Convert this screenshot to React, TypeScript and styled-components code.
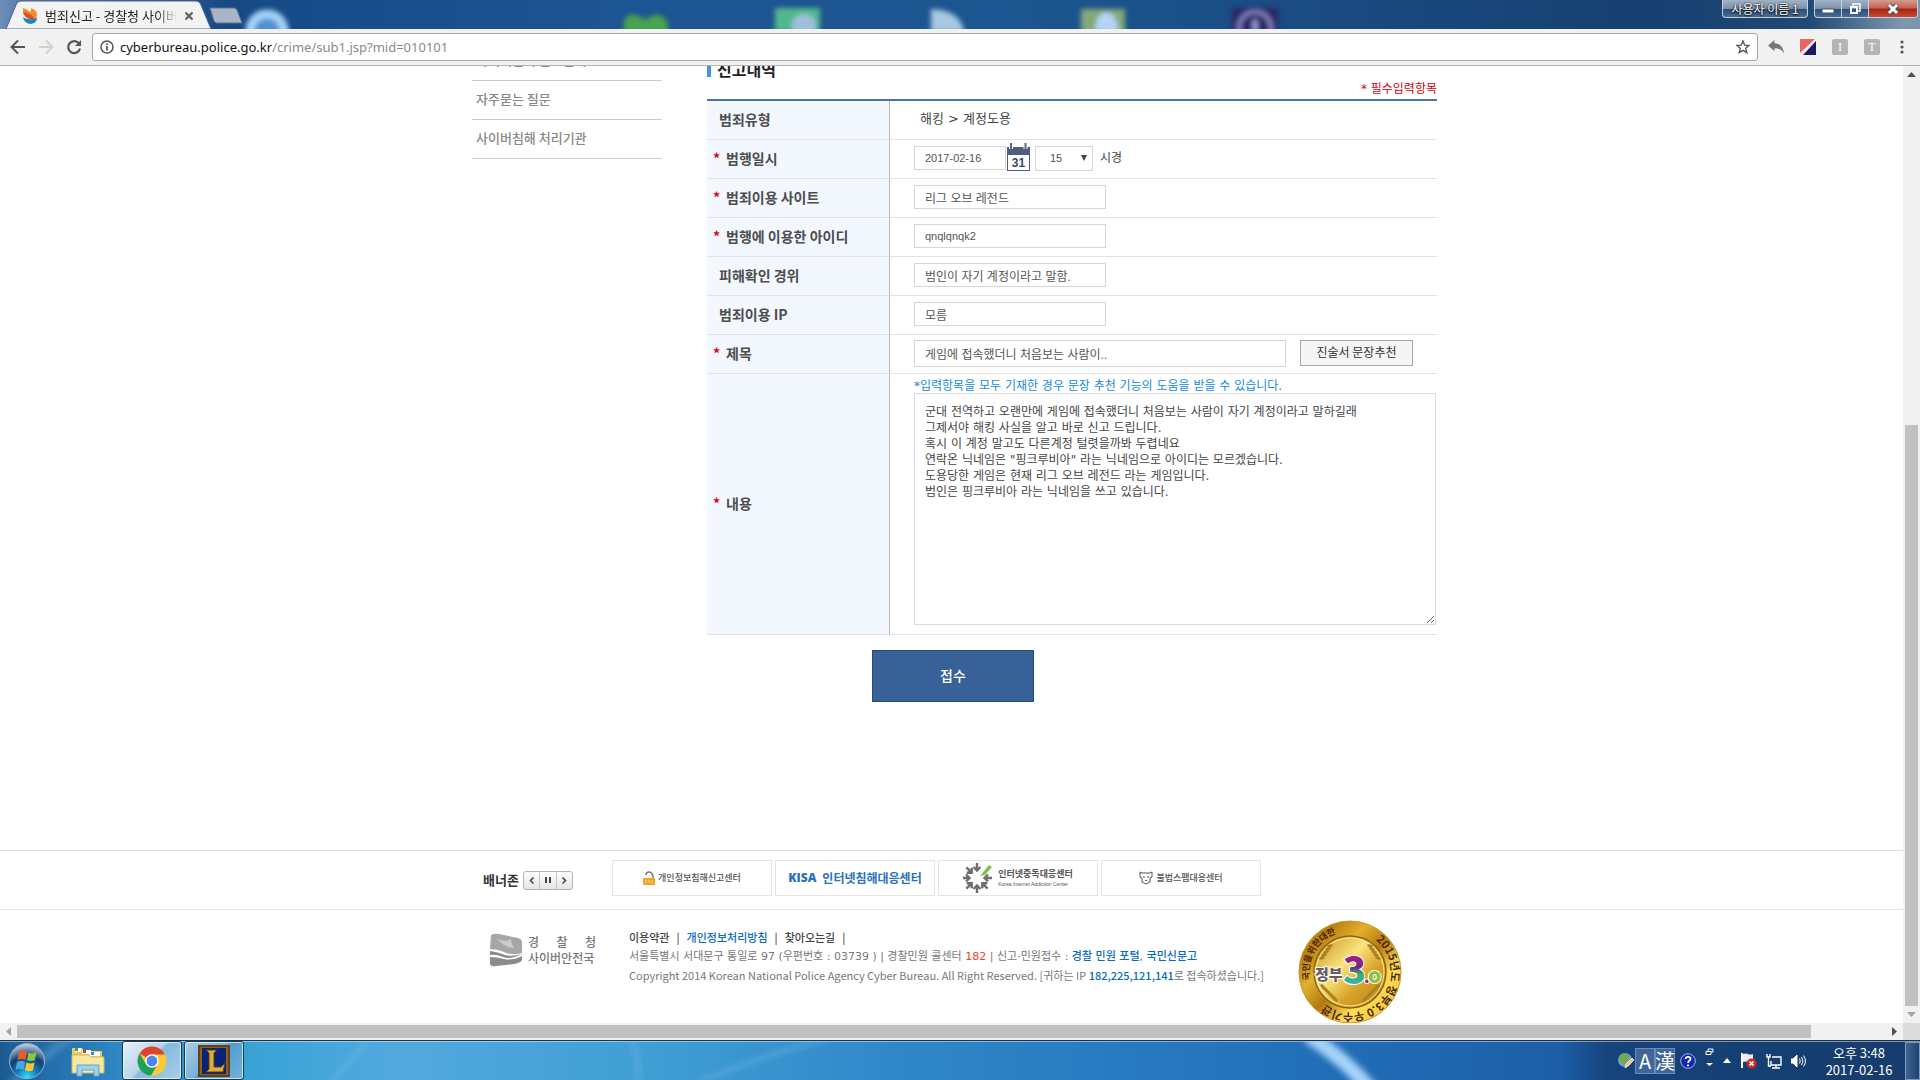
import React from "react";
import styled, { createGlobalStyle } from "styled-components";

const KR = `"Noto Sans CJK KR", sans-serif`;

const Global = createGlobalStyle`
  * { box-sizing: border-box; }
  html, body { margin: 0; padding: 0; }
  body { font-family: ${KR}; font-size: 12px; color: #444; background: #fff; overflow: hidden; }
  button, input, select, textarea { font-family: inherit; margin: 0; }
  a { color: inherit; text-decoration: none; }
  svg { display: block; flex: none; }
`;

const Screen = styled.div`
  height: 100vh;
  display: flex;
  flex-direction: column;
  overflow: hidden;
`;

/* ---------- browser frame ---------- */

const TitleBar = styled.header`
  position: relative;
  flex: none;
  height: 29px;
  display: flex;
  justify-content: space-between;
  background: linear-gradient(90deg, #6f8db8 0, #5573a5 30px, #164a86 230px, #1d5492 620px, #1c5690 1000px, #1a4a80 1350px, #173f70 1650px, #1f4976 1810px, #7d95ad 1900px);
`;

const Wallpaper = styled.svg`
  position: absolute;
  left: 0;
  top: 0;
`;

const Tab = styled.div`
  position: relative;
  display: flex;
  align-items: center;
  gap: 7px;
  width: 212px;
  height: 29px;
  padding: 2px 18px 0 22px;
`;

const TabShape = styled.svg`
  position: absolute;
  left: 0;
  top: 0;
`;

const TabTitle = styled.span`
  position: relative;
  flex: 1;
  overflow: hidden;
  white-space: nowrap;
  font-size: 13px;
  line-height: 20px;
  color: #222;
  mask-image: linear-gradient(90deg, #000 85%, transparent);
`;

const TabIcon = styled.span`
  position: relative;
`;

const BareButton = styled.button`
  position: relative;
  display: flex;
  align-items: center;
  justify-content: center;
  padding: 0;
  border: 0;
  background: none;
`;

const WindowControls = styled.div`
  position: relative;
  display: flex;
  align-items: flex-start;
  gap: 6px;
  padding-right: 2px;
`;

const glass = `
  border: 1px solid #c3d0de;
  border-top: 0;
  background: linear-gradient(#a3b3c6 0, #7b90aa 50%, #2b4d75 52%, #4a6b91 100%);
`;

const UserButton = styled.button`
  height: 18px;
  width: 86px;
  padding: 0;
  border-radius: 0 0 4px 4px;
  ${glass}
  color: #fff;
  font-size: 12px;
  line-height: 16px;
  text-shadow: 0 0 2px #000, 0 1px 2px #000;
`;

const ControlGroup = styled.div`
  display: flex;
  height: 18px;
  overflow: hidden;
  border-radius: 0 0 4px 4px;
  ${glass}
`;

const ControlButton = styled(BareButton)<{ $close?: boolean }>`
  width: ${(p) => (p.$close ? 48 : 27)}px;
  height: 17px;
  border-right: ${(p) => (p.$close ? 0 : 1)}px solid #c3d0de;
  background: ${(p) => (p.$close ? "linear-gradient(#d59a92 0, #c4604f 48%, #a82414 52%, #c8492f 100%)" : "none")};
`;

const Toolbar = styled.nav`
  flex: none;
  display: flex;
  align-items: center;
  height: 37px;
  padding: 0 12px 0 4px;
  background: #f2f1f2;
  border-bottom: 1px solid #b5b4b5;
`;

const NavButton = styled(BareButton)`
  width: 28px;
  height: 28px;
  margin-top: -1px;
`;

const Address = styled.div`
  flex: 1;
  display: flex;
  align-items: center;
  gap: 6px;
  height: 28px;
  margin: -1px 0 0 4px;
  padding: 0 7px;
  background: #fff;
  border: 1px solid #a9a8a9;
  border-radius: 3px;
`;

const Url = styled.div`
  flex: 1;
  font-family: "Noto Sans", sans-serif;
  font-size: 13px;
  line-height: 20px;
  color: #8a8a8a;
  outline: 0;
`;

const Host = styled.span`
  color: #111;
`;

const Extensions = styled.div`
  display: flex;
  align-items: center;
  gap: 16px;
  margin-left: 10px;
`;

const Extension = styled(BareButton)<{ $letter?: boolean; $narrow?: boolean }>`
  width: ${(p) => (p.$narrow ? 12 : 16)}px;
  height: 16px;
  border-radius: 2px;
  background: ${(p) => (p.$letter ? "#b6b5b6" : "none")};
  color: #fff;
  font-family: "Liberation Serif", serif;
  font-size: 12px;
  line-height: 16px;
`;

/* ---------- viewport with scroll bars ---------- */

const Viewport = styled.div`
  flex: 1;
  min-height: 0;
  display: grid;
  grid-template-columns: 1fr 17px;
  grid-template-rows: 1fr 17px;
`;

const PageView = styled.div`
  overflow: hidden;
`;

const ScrolledPage = styled.div`
  margin-top: -24px;
`;

const VScroll = styled.div`
  display: flex;
  flex-direction: column;
  align-items: center;
  background: #f1f1f1;
`;

const HScroll = styled.div`
  display: flex;
  align-items: center;
  background: #f1f1f1;
`;

const ScrollArrow = styled(BareButton)`
  flex: none;
  width: 17px;
  height: 17px;
`;

const VTrack = styled.div`
  flex: 1;
  display: flex;
  flex-direction: column;
  justify-content: flex-end;
`;

const VThumb = styled.div`
  width: 13px;
  height: 63%;
  background: #c1c1c1;
`;

const HTrack = styled.div`
  flex: 1;
`;

const HThumb = styled.div`
  width: 96%;
  height: 13px;
  background: #c1c1c1;
`;

const ScrollCorner = styled.div`
  background: #dcdcdc;
`;

/* ---------- page ---------- */

const Container = styled.div`
  display: flex;
  width: 971px;
  max-width: 100%;
  margin: 0 auto;
  padding-left: 6px;
`;

const Side = styled.ul`
  flex: none;
  width: 190px;
  margin: 0 45px 0 0;
  padding: 0;
  list-style: none;
`;

const SideItem = styled.li`
  height: 39px;
  padding-left: 4px;
  border-bottom: 1px solid #ccc;
  font-size: 13px;
  font-weight: 500;
  line-height: 36px;
  color: #888;
`;

const Main = styled.main`
  flex: 1;
  padding-top: 17px;
`;

const Heading = styled.h2`
  display: flex;
  align-items: center;
  gap: 6px;
  margin: 0;
  font-size: 16px;
  font-weight: 700;
  line-height: 20px;
  color: #222;
  &::before {
    content: "";
    width: 4px;
    height: 16px;
    background: #3f93e5;
  }
`;

const RequiredNote = styled.p`
  margin: 0;
  padding: 2px 0;
  text-align: right;
  font-family: "DejaVu Sans", ${KR};
  font-size: 12px;
  line-height: 16px;
  color: #d8000c;
`;

const FormTable = styled.table`
  width: 100%;
  border-spacing: 0;
  border-top: 2px solid #4477a8;
`;

const Label = styled.th<{ $required?: boolean }>`
  width: 183px;
  height: 39px;
  padding: 0 0 2px ${(p) => (p.$required ? 6 : 12)}px;
  text-align: left;
  font-size: 14px;
  font-weight: 700;
  line-height: 20px;
  color: #4d4d4f;
  background: #f3f8fe;
  border-right: 1px solid #b9b9b9;
  border-bottom: 1px solid #e2e2e2;
`;

const Star = styled.span`
  display: inline-block;
  width: 13px;
  color: #e00015;
`;

const Cell = styled.td`
  padding: 0 0 2px 24px;
  border-bottom: 1px solid #e2e2e2;
`;

const FieldRow = styled.div`
  display: flex;
  align-items: center;
`;

const PlainText = styled.span`
  padding-left: 6px;
  font-family: "DejaVu Sans", ${KR};
  font-size: 13px;
  line-height: 20px;
  color: #444;
`;

const TextInput = styled.input<{ $w: number; $tall?: boolean; $latin?: boolean }>`
  width: ${(p) => p.$w}px;
  height: ${(p) => (p.$tall ? 27 : 24)}px;
  padding: 0 10px;
  border: 1px solid #d5d5d5;
  background: #fff;
  font-family: "Liberation Sans", ${KR};
  font-size: ${(p) => (p.$latin ? 11 : 12)}px;
  color: #555;
  outline: 0;
`;

const CalendarButton = styled(BareButton)`
  margin: 0 5px 2px 1px;
`;

const HourBox = styled.span`
  position: relative;
  display: flex;
  margin-right: 7px;
`;

const HourArrow = styled.svg`
  position: absolute;
  right: 6px;
  top: 9px;
  pointer-events: none;
`;

const HourSelect = styled.select`
  appearance: none;
  width: 58px;
  height: 25px;
  padding: 0 14px;
  border: 1px solid #d5d5d5;
  border-radius: 0;
  background: #fff;
  font-family: "Liberation Sans", sans-serif;
  font-size: 11px;
  color: #555;
`;

const HourUnit = styled.span`
  padding-bottom: 3px;
`;

const SuggestButton = styled.button`
  width: 113px;
  height: 26px;
  margin-left: 14px;
  padding: 0 0 2px;
  border: 1px solid #a8a8a8;
  background: #f5f5f5;
  font-size: 12px;
  line-height: 20px;
  color: #333;
`;

const Hint = styled.p`
  margin: 0;
  padding-top: 5px;
  font-family: "DejaVu Sans", ${KR};
  font-size: 12px;
  line-height: 14px;
  color: #128ae0;
`;

const ContentCell = styled(Cell)`
  padding-bottom: 9px;
`;

const ContentBox = styled.textarea`
  display: block;
  width: 522px;
  height: 232px;
  padding: 10px;
  border: 1px solid #dcdcdc;
  background: #fff;
  font-family: "DejaVu Sans", ${KR};
  font-size: 12px;
  line-height: 16px;
  color: #444;
  resize: both;
  outline: 0;
`;

const SubmitRow = styled.div`
  padding: 15px 0 148px 165px;
`;

const Submit = styled.button`
  display: block;
  width: 162px;
  height: 52px;
  padding: 0 0 2px;
  border: 1px solid #234b7c;
  background: #386297;
  color: #fff;
  font-size: 14px;
  font-weight: 500;
  line-height: 20px;
`;

/* ---------- footer ---------- */

const BannerStrip = styled.section`
  border-top: 1px solid #dedede;
  border-bottom: 1px solid #e2e2e2;
`;

const BannerRow = styled(Container)`
  align-items: center;
  height: 58px;
  padding-left: 17px;
`;

const BannerLabel = styled.strong`
  width: 40px;
  font-size: 13px;
  line-height: 20px;
  color: #333;
`;

const Pager = styled.div`
  display: flex;
  width: 50px;
  height: 19px;
  margin-right: 39px;
  border: 1px solid #b5b5b5;
  border-radius: 3px;
  background: linear-gradient(#fff, #e4e4e4);
`;

const PagerButton = styled(BareButton)`
  flex: 1;
  & + & {
    border-left: 1px solid #c5c5c5;
  }
`;

const Banners = styled.div`
  display: flex;
  gap: 3px;
  padding-bottom: 4px;
`;

const Banner = styled.a<{ $tone?: string; $size?: number; $bold?: boolean }>`
  display: flex;
  align-items: center;
  justify-content: center;
  gap: 3px;
  width: 160px;
  height: 36px;
  border: 1px solid #e4e4e4;
  font-size: ${(p) => p.$size || 9}px;
  font-weight: ${(p) => (p.$bold ? 700 : 500)};
  line-height: 12px;
  color: ${(p) => p.$tone || "#555"};
  white-space: nowrap;
`;

const Kisa = styled.b`
  padding-right: 3px;
  font-family: "Open Sans", sans-serif;
  font-size: 12px;
  font-weight: 800;
`;

const Stack = styled.span`
  display: flex;
  flex-direction: column;
`;

const Tiny = styled.span`
  font-family: "Liberation Sans", sans-serif;
  font-size: 5px;
  line-height: 8px;
  font-weight: 400;
`;

const FooterRow = styled(Container)`
  align-items: flex-start;
  padding: 10px 0 0 24px;
`;

const Agency = styled.div`
  display: flex;
  align-items: center;
  gap: 6px;
  width: 139px;
  padding-top: 13px;
`;

const AgencyName = styled.div`
  display: flex;
  flex-direction: column;
  width: 68px;
  font-size: 12px;
  font-weight: 500;
  line-height: 16px;
  color: #777;
  white-space: nowrap;
`;

const Spread = styled.span`
  display: flex;
  justify-content: space-between;
`;

const FooterInfo = styled.div`
  width: 669px;
  padding-top: 8px;
  font-size: 11px;
  line-height: 18px;
  color: #777;
  white-space: nowrap;
`;

const FooterLinks = styled.div`
  display: flex;
  gap: 7px;
  font-size: 11px;
  font-weight: 500;
  line-height: 18px;
  color: #444;
`;

const FooterLine = styled.p<{ $lead?: boolean }>`
  margin: 0;
  padding-top: ${(p) => (p.$lead ? 2 : 0)}px;
  font-family: ${(p) => (p.$lead ? `"DejaVu Sans", ${KR}` : KR)};
  font-size: 11px;
`;

const Blue = styled.a`
  color: #0a6cc0;
  font-weight: 500;
`;

const Red = styled.span`
  color: #e8452c;
`;

/* ---------- taskbar ---------- */

const Taskbar = styled.footer`
  position: relative;
  flex: none;
  display: flex;
  align-items: center;
  justify-content: space-between;
  height: 40px;
  border-top: 1px solid #17334f;
  background: linear-gradient(90deg, #1b5b93 0, #2572b0 60px, #2e88c4 120px, #3ba3d6 260px, #52a9de 400px, #409fd4 640px, #2f87c9 900px, #2270b9 1300px, #1d5ea8 1560px, #16437a 1610px, #153c6b 1920px);
  box-shadow: inset 0 1px 0 rgba(255, 255, 255, 0.45);
`;

const TaskGroup = styled.div`
  position: relative;
  display: flex;
  align-items: center;
  height: 39px;
`;

const Orb = styled(BareButton)`
  width: 54px;
  height: 39px;
`;

const Task = styled(BareButton)<{ $open?: boolean; $active?: boolean }>`
  width: ${(p) => (p.$open ? 60 : 68)}px;
  height: 39px;
  margin-right: ${(p) => (p.$open ? 2 : 0)}px;
  border: ${(p) => (p.$open ? "1px solid #123a57" : "0")};
  border-radius: 3px;
  box-shadow: ${(p) => (p.$open ? "inset 0 0 0 1px rgba(255,255,255,.65)" : "none")};
  background: ${(p) =>
    p.$active
      ? "linear-gradient(135deg, #e9f1f8, #b9d5ea 45%, #86b9df 50%, #a9cfe8)"
      : p.$open
        ? "linear-gradient(135deg, #a9cde6, #7ab3d8 45%, #4f9dcd 50%, #71b4dc)"
        : "none"};
`;

const Ime = styled(BareButton)`
  width: 20px;
  height: 26px;
  border: 1px solid rgba(150, 180, 215, 0.5);
  background: rgba(140, 170, 205, 0.35);
  color: #fff;
  font-size: 20px;
  line-height: 24px;
`;

const TrayIcons = styled.div`
  display: flex;
  align-items: center;
  gap: 9px;
  padding: 0 17px 0 5px;
`;

const Clock = styled.time`
  width: 72px;
  margin-right: 10px;
  text-align: center;
  font-size: 13px;
  line-height: 17px;
  color: #fff;
`;

const ShowDesktop = styled(BareButton)`
  width: 15px;
  height: 38px;
  border: 1px solid #7f9ab8;
  background: linear-gradient(90deg, #3f6490, #1c4270);
`;

const ArrowHead = ({ d, fill }: { d: string; fill: string }) => (
  <svg width="9" height="9" viewBox="0 0 9 9">
    <path d={d} fill={fill} />
  </svg>
);

const DesktopBlur = () => (
  <Wallpaper width="1400" height="29" viewBox="0 0 1400 29" aria-hidden="true">
    <defs>
      <filter id="soft" x="-20%" y="-50%" width="140%" height="200%">
        <feGaussianBlur stdDeviation="2.600" />
      </filter>
    </defs>
    <g filter="url(#soft)">
      <circle cx="267" cy="31" r="17" fill="#4f8fce" stroke="#a5d2f7" strokeWidth="9" />
      <path d="M624 32V20q5-7 12-5q5 2 10 5q6-6 13-5q8 3 9 10v8z" fill="#4aa34f" />
      <rect x="775" y="8" width="45" height="24" fill="#52b78e" />
      <circle cx="804" cy="26" r="12" fill="#9fc0dc" />
      <path d="M931 32V9q30 1 33 23z" fill="#a7c8e0" />
      <rect x="1081" y="9" width="44" height="24" fill="#84a878" />
      <path d="M1095 32q0-18 11-20q12 2 12 20z" fill="#b4d4f7" />
      <rect x="1232" y="8" width="46" height="26" fill="#2c2768" />
      <circle cx="1255" cy="28" r="16" fill="none" stroke="#8587bd" strokeWidth="4" />
      <path d="M1255 20v12" stroke="#9fa3d3" strokeWidth="5" />
    </g>
  </Wallpaper>
);

const Favicon = () => (
  <svg width="16" height="16" viewBox="0 0 16 16">
    <path d="M1 0q4 1 7 4q2-2 1-4q6 2 6 7q0 3-2 4Q8 6 1 5z" fill="#f58a2b" />
    <path d="M1 4q8 1 12 7q-3 1-6 0Q2 9 1 4z" fill="#e0501e" />
    <path d="M1 9q5 4 14 1q0 5-6 6q-7 0-8-7z" fill="#1689c9" />
  </svg>
);

const Medal = () => (
  <svg width="104" height="104" viewBox="0 0 104 104" role="img" aria-label="정부3.0 우수기관">
    <defs>
      <linearGradient id="rim" x1="0" y1="0" x2="1" y2="1">
        <stop offset="0" stopColor="#e5b52c" />
        <stop offset=".18" stopColor="#b77d10" />
        <stop offset=".35" stopColor="#e3b02c" />
        <stop offset=".52" stopColor="#b47912" />
        <stop offset=".7" stopColor="#ffdf55" />
        <stop offset="1" stopColor="#e9b830" />
      </linearGradient>
      <linearGradient id="face" x1="0" y1="0" x2="1" y2="1">
        <stop offset="0" stopColor="#c08a17" />
        <stop offset=".4" stopColor="#fbe47d" />
        <stop offset=".65" stopColor="#d9a32a" />
        <stop offset="1" stopColor="#b27c17" />
      </linearGradient>
      <linearGradient id="three" x1="0" y1="0" x2="0" y2="1">
        <stop offset=".2" stopColor="#c4127b" />
        <stop offset=".5" stopColor="#6b2d88" />
        <stop offset=".62" stopColor="#3fae6a" />
        <stop offset=".9" stopColor="#37b1dc" />
      </linearGradient>
      <path id="ringLeft" d="M12 60A41 41 0 0 1 50 11" />
      <path id="ringRight" d="M76 19A41 41 0 1 1 18 75" />
    </defs>
    <circle cx="52" cy="52" r="51" fill="url(#rim)" stroke="#c8952a" />
    <circle cx="52" cy="52" r="36" fill="url(#face)" stroke="#8f6410" strokeWidth="1.500" />
    <circle cx="52" cy="52" r="34" fill="none" stroke="#fbe9a0" />
    <g fill="#a8821f">
      {[0, 1, 2, 3, 4].map((i) => (
        <g key={i}>
          <ellipse cx={25 + i * 3} cy={67 + i * 3} rx="3.500" ry="1.500" transform={`rotate(50 ${25 + i * 3} ${67 + i * 3})`} />
          <ellipse cx={79 - i * 3} cy={67 + i * 3} rx="3.500" ry="1.500" transform={`rotate(-50 ${79 - i * 3} ${67 + i * 3})`} />
          <ellipse cx={24 + i * 2} cy={38 - i * 3} rx="3" ry="1.500" transform={`rotate(-20 ${24 + i * 2} ${38 - i * 3})`} />
          <ellipse cx={80 - i * 2} cy={38 - i * 3} rx="3" ry="1.500" transform={`rotate(20 ${80 - i * 2} ${38 - i * 3})`} />
        </g>
      ))}
    </g>
    <g fontFamily="Noto Sans CJK KR, sans-serif" fontWeight="700" fill="#4b2408">
      <text fontSize="9">
        <textPath href="#ringLeft">국민을위한대한</textPath>
      </text>
      <text fontSize="11">
        <textPath href="#ringRight" startOffset="2">2015년도 정부3.0 우수기관</textPath>
      </text>
    </g>
    <g fontFamily="Noto Sans CJK KR, sans-serif" fontWeight="900" stroke="#fff" strokeWidth="2" paintOrder="stroke">
      <text x="17" y="60" fontSize="15" fill="#6b5a57">정부</text>
      <text x="45" y="64" fontSize="38" fill="url(#three)">3</text>
      <text x="66" y="63" fontSize="16" fill="#a4227f">.</text>
      <text x="70" y="63" fontSize="21" fill="#8bc53f">o</text>
    </g>
  </svg>
);

type InputRow = { id: string; label: string; required?: boolean; value: string; latin?: boolean };

const inputRows: InputRow[] = [
  { id: "site", label: "범죄이용 사이트", required: true, value: "리그 오브 레전드" },
  { id: "userid", label: "범행에 이용한 아이디", required: true, value: "qnqlqnqk2", latin: true },
  { id: "how", label: "피해확인 경위", value: "범인이 자기 계정이라고 말함." },
  { id: "ip", label: "범죄이용 IP", value: "모름" },
];

const statement = `군대 전역하고 오랜만에 게임에 접속했더니 처음보는 사람이 자기 계정이라고 말하길래
그제서야 해킹 사실을 알고 바로 신고 드립니다.
혹시 이 계정 말고도 다른계정 털렷을까봐 두렵네요
연락온 닉네임은 "핑크루비아" 라는 닉네임으로 아이디는 모르겠습니다.
도용당한 게임은 현재 리그 오브 레전드 라는 게임입니다.
범인은 핑크루비아 라는 닉네임을 쓰고 있습니다.`;

const FieldLabel = ({ id, required, children }: { id?: string; required?: boolean; children: React.ReactNode }) => (
  <Label scope="row" $required={required}>
    {required && <Star>*</Star>}
    {id ? <label htmlFor={id}>{children}</label> : children}
  </Label>
);

const BrowserChrome = () => (
  <>
    <TitleBar>
      <DesktopBlur />
      <Tab>
        <TabShape width="245" height="29" viewBox="0 0 245 29">
          <path d="M6 29L16 5q1-4 5-4h175q4 0 5 4l10 24z" fill="#f4f3f4" stroke="#49648a" strokeWidth="1" />
          <path d="M210 8h24q2 0 3 2l5 13h-25q-2 0-3-2z" fill="#a9b4c4" stroke="#5c7391" />
        </TabShape>
        <TabIcon>
          <Favicon />
        </TabIcon>
        <TabTitle>범죄신고 - 경찰청 사이버안전국</TabTitle>
        <BareButton aria-label="탭 닫기">
          <svg width="10" height="10" viewBox="0 0 10 10">
            <path d="M1.500 1.500l7 7M8.500 1.500l-7 7" stroke="#5a5a5a" strokeWidth="2" />
          </svg>
        </BareButton>
      </Tab>
      <WindowControls>
        <UserButton>사용자 이름 1</UserButton>
        <ControlGroup>
          <ControlButton aria-label="최소화">
            <svg width="14" height="12" viewBox="0 0 14 12">
              <rect x="1" y="6" width="12" height="4" fill="#fff" stroke="#40536b" />
            </svg>
          </ControlButton>
          <ControlButton aria-label="이전 크기로">
            <svg width="14" height="13" viewBox="0 0 14 13" fill="none">
              <path d="M5 4V2h7v7h-2" stroke="#fff" strokeWidth="1.500" />
              <rect x="3" y="5" width="6" height="6" stroke="#fff" strokeWidth="2" />
            </svg>
          </ControlButton>
          <ControlButton $close aria-label="닫기">
            <svg width="14" height="12" viewBox="0 0 14 12">
              <path d="M3 2l8 8M11 2l-8 8" stroke="#4a4a5a" strokeWidth="5" />
              <path d="M3 2l8 8M11 2l-8 8" stroke="#fff" strokeWidth="3" />
            </svg>
          </ControlButton>
        </ControlGroup>
      </WindowControls>
    </TitleBar>
    <Toolbar>
      <NavButton aria-label="뒤로">
        <svg width="18" height="16" viewBox="0 0 18 16" fill="none" stroke="#555" strokeWidth="2">
          <path d="M16 8H3M9 1.500L2.500 8L9 14.500" />
        </svg>
      </NavButton>
      <NavButton aria-label="앞으로" disabled>
        <svg width="18" height="16" viewBox="0 0 18 16" fill="none" stroke="#d2d1d2" strokeWidth="2">
          <path d="M2 8h13M9 1.500L15.500 8L9 14.500" />
        </svg>
      </NavButton>
      <NavButton aria-label="새로고침">
        <svg width="16" height="16" viewBox="0 0 16 16">
          <path d="M13 4.500A6 6 0 1 0 14 9.500" fill="none" stroke="#555" strokeWidth="2.200" />
          <path d="M15 1v6H9z" fill="#555" />
        </svg>
      </NavButton>
      <Address>
        <svg width="14" height="14" viewBox="0 0 14 14">
          <circle cx="7" cy="7" r="6" fill="none" stroke="#555" strokeWidth="1.500" />
          <path d="M7 6v4.500M7 3.300v1.600" stroke="#555" strokeWidth="1.700" />
        </svg>
        <Url role="textbox" aria-label="주소">
          <Host>cyberbureau.police.go.kr</Host>/crime/sub1.jsp?mid=010101
        </Url>
        <svg width="14" height="14" viewBox="0 0 14 14">
          <path d="M7 1l1.700 4.200 4.300.3-3.300 2.800 1.100 4.300L7 10.300l-3.800 2.300 1.100-4.300L1 5.500l4.300-.3z" fill="none" stroke="#555" strokeWidth="1.400" />
        </svg>
      </Address>
      <Extensions>
        <Extension aria-label="되돌리기">
          <svg width="16" height="14" viewBox="0 0 16 14">
            <path d="M0 5.500L6.500 0v3.200C12 3.500 15.500 7 16 13.500C13.500 9.500 11 8.300 6.500 8.200v3z" fill="#777" />
          </svg>
        </Extension>
        <Extension aria-label="확장 프로그램">
          <svg width="16" height="16" viewBox="0 0 16 16">
            <path d="M0 0h15L0 14z" fill="#e9665e" />
            <path d="M16 2v14H3z" fill="#1c1964" />
          </svg>
        </Extension>
        <Extension $letter>I</Extension>
        <Extension $letter>T</Extension>
        <Extension $narrow aria-label="메뉴">
          <svg width="4" height="14" viewBox="0 0 4 14" fill="#555">
            <circle cx="2" cy="2" r="1.600" />
            <circle cx="2" cy="7" r="1.600" />
            <circle cx="2" cy="12" r="1.600" />
          </svg>
        </Extension>
      </Extensions>
    </Toolbar>
  </>
);

const ReportForm = () => (
  <Main>
    <Heading>신고내역</Heading>
    <RequiredNote>* 필수입력항목</RequiredNote>
    <FormTable>
      <tbody>
        <tr>
          <FieldLabel>범죄유형</FieldLabel>
          <Cell>
            <PlainText>해킹 &gt; 계정도용</PlainText>
          </Cell>
        </tr>
        <tr>
          <FieldLabel id="date" required>범행일시</FieldLabel>
          <Cell>
            <FieldRow>
              <TextInput id="date" $w={92} $latin defaultValue="2017-02-16" />
              <CalendarButton aria-label="날짜 선택">
                <svg width="23" height="28" viewBox="0 0 23 28">
                  <rect x=".5" y="5" width="22" height="22.500" fill="#fff" stroke="#4c5f7f" />
                  <path d="M0 4h23v8H0z" fill="#4c5f7f" />
                  <path d="M4 0v6M18.500 0v6" stroke="#fff" strokeWidth="4" />
                  <path d="M4 0v6M18.500 0v6" stroke="#5a6b88" strokeWidth="2" />
                  <text x="11.500" y="24" textAnchor="middle" fontFamily="Liberation Sans" fontWeight="700" fontSize="12" fill="#3a4560">31</text>
                </svg>
              </CalendarButton>
              <HourBox>
                <HourSelect aria-label="범행 시각" defaultValue="15">
                  <option>15</option>
                </HourSelect>
                <HourArrow width="6" height="6" viewBox="0 0 6 6">
                  <path d="M0 0h6L3 6z" fill="#444" />
                </HourArrow>
              </HourBox>
              <HourUnit>시경</HourUnit>
            </FieldRow>
          </Cell>
        </tr>
        {inputRows.map((r) => (
          <tr key={r.id}>
            <FieldLabel id={r.id} required={r.required}>{r.label}</FieldLabel>
            <Cell>
              <FieldRow>
                <TextInput id={r.id} $w={192} $latin={r.latin} defaultValue={r.value} />
              </FieldRow>
            </Cell>
          </tr>
        ))}
        <tr>
          <FieldLabel id="title" required>제목</FieldLabel>
          <Cell>
            <FieldRow>
              <TextInput id="title" $w={372} $tall defaultValue="게임에 접속했더니 처음보는 사람이.." />
              <SuggestButton>진술서 문장추천</SuggestButton>
            </FieldRow>
          </Cell>
        </tr>
        <tr>
          <FieldLabel id="content" required>내용</FieldLabel>
          <ContentCell>
            <Hint>*입력항목을 모두 기재한 경우 문장 추천 기능의 도움을 받을 수 있습니다.</Hint>
            <ContentBox id="content" spellCheck={false} defaultValue={statement} />
          </ContentCell>
        </tr>
      </tbody>
    </FormTable>
    <SubmitRow>
      <Submit>접수</Submit>
    </SubmitRow>
  </Main>
);

const SiteFooter = () => (
  <>
    <BannerStrip>
      <BannerRow>
        <BannerLabel>배너존</BannerLabel>
        <Pager>
          <PagerButton aria-label="이전">
            <svg width="6" height="7" viewBox="0 0 6 7" fill="none" stroke="#444" strokeWidth="1.500"><path d="M4.500 .5L1.500 3.500l3 3" /></svg>
          </PagerButton>
          <PagerButton aria-label="정지">
            <svg width="6" height="6" viewBox="0 0 6 6" fill="#444"><path d="M0 0h2v6H0zM4 0h2v6H4z" /></svg>
          </PagerButton>
          <PagerButton aria-label="다음">
            <svg width="6" height="7" viewBox="0 0 6 7" fill="none" stroke="#444" strokeWidth="1.500"><path d="M1.500 .5l3 3-3 3" /></svg>
          </PagerButton>
        </Pager>
        <Banners>
          <Banner href="#">
            <svg width="12" height="15" viewBox="0 0 12 15">
              <path d="M3 4q0-3 3-3t4 4v3" fill="none" stroke="#777" strokeWidth="1.500" />
              <rect x="0" y="7" width="12" height="7" rx="1" fill="#f4a124" />
              <path d="M3 9v3M6 9v3M9 9v3" stroke="#fbd28a" />
            </svg>
            개인정보침해신고센터
          </Banner>
          <Banner href="#" $tone="#2a72bd" $size={12} $bold>
            <Kisa>KISA</Kisa>
            인터넷침해대응센터
          </Banner>
          <Banner href="#" $bold>
            <svg width="32" height="30" viewBox="0 0 32 30">
              {[0, 90, 135, 180, 225, 270, 315].map((a) => (
                <path key={a} d="M14 0v7M10.500 4L14 7.500l3.500-3.500" fill="none" stroke="#6d6d6d" strokeWidth="2.400" transform={`rotate(${a} 14 15)`} />
              ))}
              <path d="M18 12L26 2l3 2-7 8-5 1z" fill="#7cc23c" />
            </svg>
            <Stack>
              인터넷중독대응센터
              <Tiny>Korea Internet Addiction Center</Tiny>
            </Stack>
          </Banner>
          <Banner href="#">
            <svg width="14" height="14" viewBox="0 0 14 14" fill="none" stroke="#555">
              <path d="M3 2L1 1v5l2 1v4l4 2 4-2V7l2-1V1l-2 1z" />
              <path d="M5 5v2M9 5v2" />
              <path d="M6 9h2v1H6z" fill="#c33" stroke="none" />
            </svg>
            불법스팸대응센터
          </Banner>
        </Banners>
      </BannerRow>
    </BannerStrip>
    <FooterRow>
      <Agency>
        <svg width="32" height="34" viewBox="0 0 32 34">
          <path d="M1 2q3-2 8-1l19 4q4 1 4 4v11Q22 23 14 19Q7 16 0 16z" fill="#a6a6a6" />
          <path d="M6 5q8 5 15 1q0 6 4 9q-9 1-19-10z" fill="#c9c9c9" />
          <path d="M0 18q8 1 15 4 8 2 17-1v6q-2 3-8 4L6 33q-6 1-6-3z" fill="#8b8b8b" />
          <path d="M0 22q6-1 13 2t19-3v2q-10 5-18 3T0 24z" fill="#fff" />
        </svg>
        <AgencyName>
          <Spread><span>경</span><span>찰</span><span>청</span></Spread>
          <span>사이버안전국</span>
        </AgencyName>
      </Agency>
      <FooterInfo>
        <FooterLinks>
          <a href="#">이용약관</a>
          <span>|</span>
          <Blue href="#">개인정보처리방침</Blue>
          <span>|</span>
          <a href="#">찾아오는길</a>
          <span>|</span>
        </FooterLinks>
        <FooterLine $lead>
          서울특별시 서대문구 통일로 97 (우편번호 : 03739 ) | 경찰민원 콜센터 <Red>182</Red> | 신고·민원접수 : <Blue href="#">경찰 민원 포털</Blue>, <Blue href="#">국민신문고</Blue>
        </FooterLine>
        <FooterLine>
          Copyright 2014 Korean National Police Agency Cyber Bureau. All Right Reserved. [귀하는 IP <Blue as="span">182,225,121,141</Blue>로 접속하셨습니다.]
        </FooterLine>
      </FooterInfo>
      <Medal />
    </FooterRow>
  </>
);

const WindowsTaskbar = () => (
  <Taskbar>
    <Wallpaper width="1920" height="39" viewBox="0 0 1920 39" aria-hidden="true">
      <defs>
        <filter id="beam" x="-20%" y="-20%" width="140%" height="140%">
          <feGaussianBlur stdDeviation="3" />
        </filter>
      </defs>
      <g filter="url(#beam)" fill="none">
        <path d="M1308-6Q1345 18 1372 50" stroke="#a5d3fa" strokeWidth="15" />
        <path d="M330 44q20-24 40-48M630-4q10 20 8 44M700 40q50-20 130-44" stroke="#7cc0e8" strokeWidth="3" opacity=".6" />
        <path d="M10 44L70-4" stroke="#5c97c4" strokeWidth="8" opacity=".6" />
      </g>
    </Wallpaper>
    <TaskGroup>
      <Orb aria-label="시작">
        <svg width="38" height="38" viewBox="0 0 38 38">
          <defs>
            <radialGradient id="orb" cx=".5" cy=".95" r=".9">
              <stop offset="0" stopColor="#2be0fb" />
              <stop offset=".35" stopColor="#1476b4" />
              <stop offset=".65" stopColor="#123e70" />
              <stop offset="1" stopColor="#b2c3d4" />
            </radialGradient>
          </defs>
          <circle cx="19" cy="19" r="17.500" fill="url(#orb)" stroke="#8fb5d0" />
          <path d="M11 10q4-3 8 0l-1.500 8q-4-2-8 0z" fill="#ee5a24" />
          <path d="M20.500 10.500q4 2 8-.5L27 18q-4 2-8 0z" fill="#8cc63e" />
          <path d="M9 20q4-2.500 8 0l-1.500 8q-4-2.500-8 0z" fill="#4aa5e6" />
          <path d="M18.500 20.500q4 2 8 0L25 28q-4 2.500-8 0z" fill="#fdc62d" />
        </svg>
      </Orb>
      <Task aria-label="탐색기">
        <svg width="34" height="32" viewBox="0 0 34 32">
          <path d="M1 3h10l2 3h18v22H1z" fill="#e9cc6a" />
          <path d="M4 3h6v4H4z" fill="#fff" />
          <path d="M4 3h3v3H4z" fill="#3aa53a" />
          <path d="M11 5h9v4h-9z" fill="#fff" />
          <path d="M12 5h3v3h-3z" fill="#d7392b" />
          <path d="M19 7h10v4H19z" fill="#fff" />
          <path d="M20 7h3v3h-3z" fill="#3587d4" />
          <path d="M1 10h17l2 2h13v16H1z" fill="#f8e8a2" stroke="#d4b85c" />
          <path d="M6 31V20h22v11h-5v-6H11v6z" fill="#9fd1ec" stroke="#5fa4cd" />
        </svg>
      </Task>
      <Task $open $active aria-label="Chrome">
        <svg width="30" height="30" viewBox="0 0 30 30">
          <circle cx="15" cy="15" r="14.500" fill="#fbc934" />
          <path d="M15 15L2.600 7.500A14.500 14.500 0 0 1 28 8.500H15z" fill="#dd4335" />
          <path d="M2.600 7.500A14.500 14.500 0 0 0 14 29.500L20.500 18.500L15 21L9 18z" fill="#1da05a" />
          <circle cx="15" cy="15" r="6.800" fill="#fff" />
          <circle cx="15" cy="15" r="5.400" fill="#4a86ee" />
        </svg>
      </Task>
      <Task $open aria-label="League of Legends">
        <svg width="32" height="32" viewBox="0 0 32 32">
          <rect width="32" height="32" fill="#8c5f22" />
          <rect x="1" y="1" width="30" height="30" fill="none" stroke="#3a250c" />
          <rect x="4" y="3" width="24" height="26" fill="#0b2377" />
          <path d="M8 5h11l-3 3v14h7l4-4-2 9H8l3-3V8z" fill="#e0ab3f" stroke="#5f3c0b" />
        </svg>
      </Task>
    </TaskGroup>
    <TaskGroup>
      <svg width="18" height="18" viewBox="0 0 18 18">
        <circle cx="8" cy="8" r="7" fill="#6c9fca" />
        <path d="M3 3q5-3 9 0l-2 5-3 5Q2 9 3 3z" fill="#6fae3f" />
        <path d="M8 16l1-4 6-6 2 2-6 6z" fill="#f5c55c" stroke="#fff" strokeWidth=".7" />
      </svg>
      <Ime>A</Ime>
      <Ime>漢</Ime>
      <TrayIcons>
        <svg width="16" height="16" viewBox="0 0 16 16">
          <circle cx="8" cy="8" r="7.300" fill="#1029b5" stroke="#a7b6dd" />
          <path d="M5.500 6q.3-2.200 2.600-2.200T10.500 6q0 1-1.200 1.700T8.100 10M8 11.500v1.700" fill="none" stroke="#fff" strokeWidth="1.800" />
        </svg>
        <svg width="9" height="26" viewBox="0 0 9 26" fill="none" stroke="#fff">
          <path d="M3 3V1h5v3H6M1 3.500h5v3H1z" />
          <path d="M1 15h7l-3.500 3z" fill="#fff" stroke="none" />
        </svg>
        <svg width="8" height="5" viewBox="0 0 8 5"><path d="M0 5l4-5 4 5z" fill="#fff" /></svg>
        <svg width="17" height="17" viewBox="0 0 17 17">
          <path d="M2 1v15" stroke="#fff" strokeWidth="2" />
          <path d="M3 2q3-1 5 0t5 0v8q-3 1-5 0t-5 0z" fill="#e8edf3" />
          <circle cx="11.500" cy="11.500" r="5" fill="#d8261c" />
          <path d="M9.500 9.500l4 4M13.500 9.500l-4 4" stroke="#fff" strokeWidth="1.600" />
        </svg>
        <svg width="16" height="16" viewBox="0 0 16 16" fill="none" stroke="#fff" strokeWidth="1.400">
          <path d="M6 4h9v8H5V8M10 12v2.500M6 15h8M1 1v3h3V1M2.500 4v9H5" />
        </svg>
        <svg width="15" height="14" viewBox="0 0 15 14" fill="none" stroke="#fff">
          <path d="M0 5h2l4-4v12L2 9H0z" fill="#fff" />
          <path d="M8.500 4.500q1.500 2.500 0 5M10.500 3q3 4 0 8M12.500 1.500q4 5.500 0 11" />
        </svg>
      </TrayIcons>
      <Clock>
        오후 3:48
        <br />
        2017-02-16
      </Clock>
      <ShowDesktop aria-label="바탕 화면 보기" />
    </TaskGroup>
  </Taskbar>
);

export default function App() {
  return (
    <Screen>
      <Global />
      <BrowserChrome />
      <Viewport>
        <PageView>
          <ScrolledPage>
            <Container>
              <Side>
                <SideItem><a href="#">사이버범죄 신고안내</a></SideItem>
                <SideItem><a href="#">자주묻는 질문</a></SideItem>
                <SideItem><a href="#">사이버침해 처리기관</a></SideItem>
              </Side>
              <ReportForm />
            </Container>
            <SiteFooter />
          </ScrolledPage>
        </PageView>
        <VScroll>
          <ScrollArrow aria-label="위로"><ArrowHead d="M0 7l4.500-5L9 7z" fill="#505050" /></ScrollArrow>
          <VTrack><VThumb /></VTrack>
          <ScrollArrow aria-label="아래로"><ArrowHead d="M0 2l4.500 5L9 2z" fill="#a3a3a3" /></ScrollArrow>
        </VScroll>
        <HScroll>
          <ScrollArrow aria-label="왼쪽"><ArrowHead d="M7 0L2 4.500L7 9z" fill="#a3a3a3" /></ScrollArrow>
          <HTrack><HThumb /></HTrack>
          <ScrollArrow aria-label="오른쪽"><ArrowHead d="M2 0l5 4.500L2 9z" fill="#505050" /></ScrollArrow>
        </HScroll>
        <ScrollCorner />
      </Viewport>
      <WindowsTaskbar />
    </Screen>
  );
}
